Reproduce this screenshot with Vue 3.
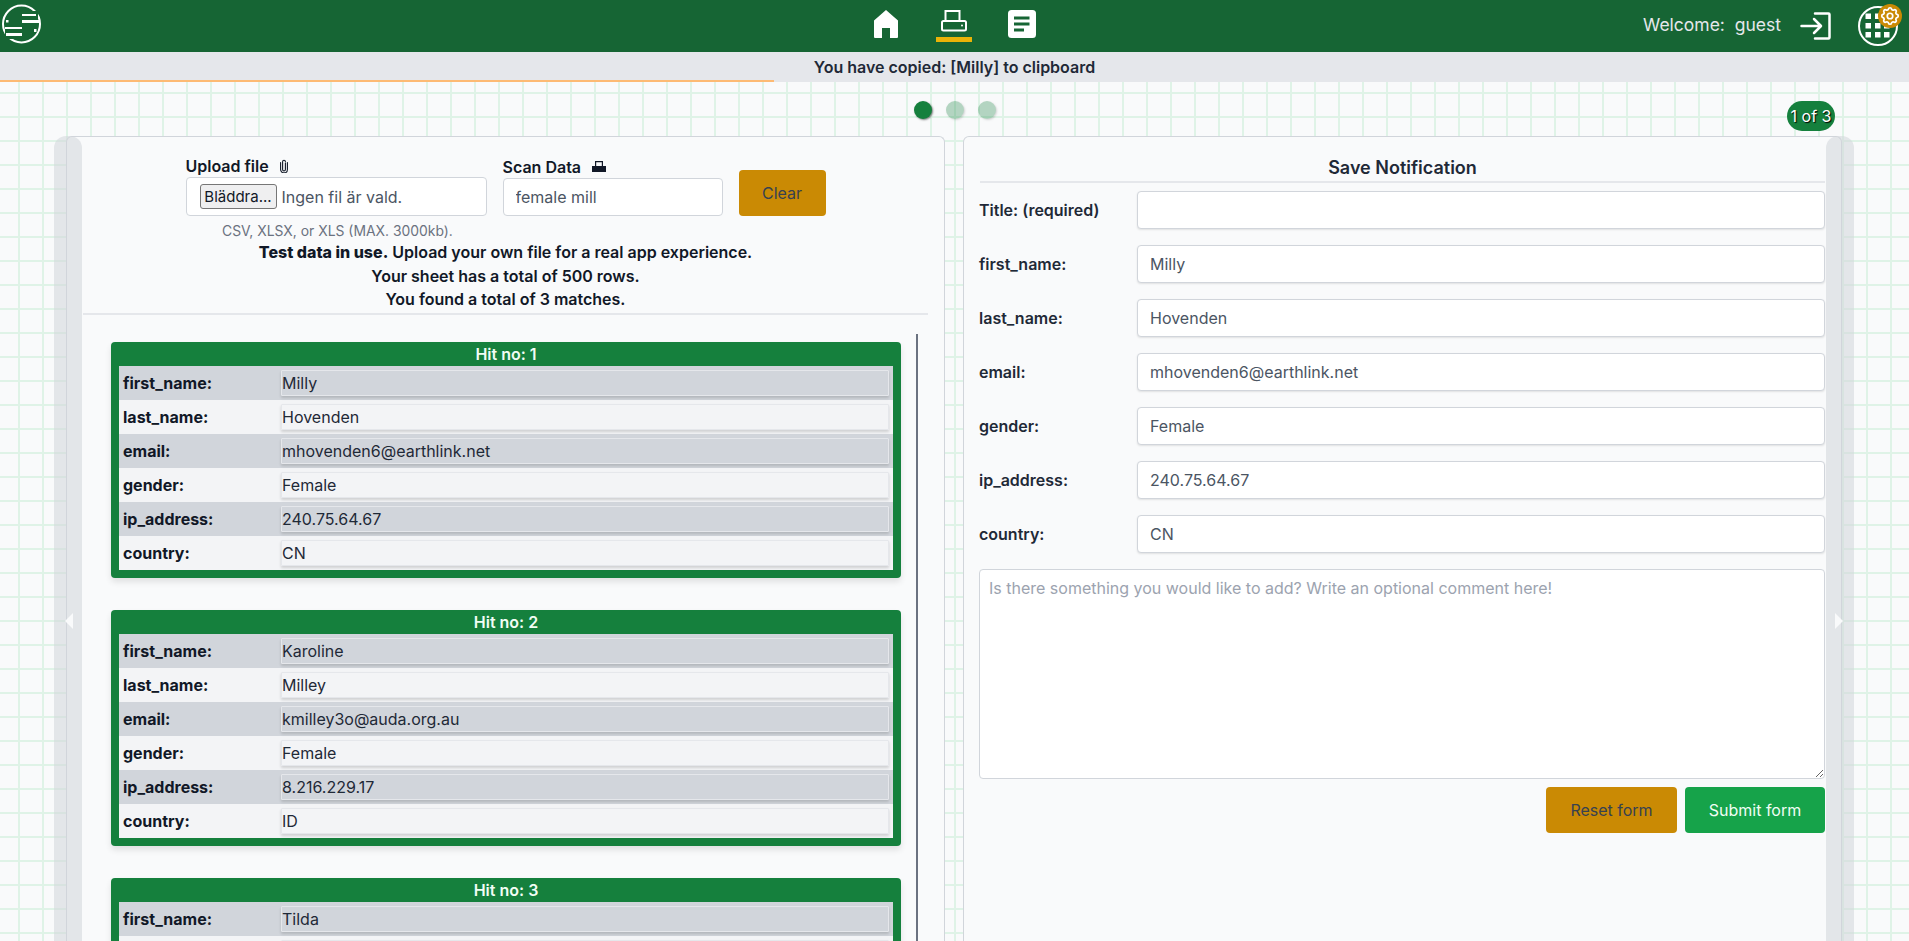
<template>
  <div class="page">
    <header class="topbar">
      <div class="side">
        <svg class="logo" width="42" height="52" viewBox="0 0 42 52">
          <circle cx="21.500" cy="24" r="18.500" fill="none" stroke="#fff" stroke-width="2" />
          <rect x="21" y="11" width="17" height="15" fill="#166534" />
          <rect x="5" y="24" width="17" height="15" fill="#166534" />
          <rect x="22" y="14" width="14" height="2" fill="#fff" />
          <rect x="22" y="20" width="17" height="3" fill="#fff" />
          <rect x="5" y="27" width="17" height="2" fill="#fff" />
          <rect x="6" y="33" width="16" height="3" fill="#fff" />
          <rect x="6" y="20" width="2.500" height="2.500" fill="#fff" />
          <rect x="34" y="29" width="2.500" height="3" fill="#fff" />
        </svg>
      </div>
      <nav class="nav">
        <a class="nav-item">
          <svg width="24" height="28" viewBox="0 0 24 28"><path d="M12 0 24 10.500V27a1 1 0 0 1-1 1h-7V18H8v10H1a1 1 0 0 1-1-1V10.500Z" fill="#fff" /></svg>
        </a>
        <a class="nav-item active">
          <svg width="26" height="22" viewBox="0 0 26 22" fill="none" stroke="#fff" stroke-width="2"><path d="M4.500 11V1h14v10" /><rect x="1" y="11" width="24" height="9.500" rx="1.500" /><circle cx="21" cy="15.500" r="1" fill="#fff" stroke="none" /></svg>
        </a>
        <a class="nav-item">
          <svg width="28" height="28" viewBox="0 0 28 28"><rect width="28" height="28" rx="3.500" fill="#fff" /><path d="M6 6.500h15.500v3H6zM6 12.500h15.500v3H6zM6 18.500h10v3H6z" fill="#166534" /></svg>
        </a>
      </nav>
      <div class="side user">
        <span class="welcome">Welcome:&nbsp; guest</span>
        <svg class="login-icon" width="31" height="28" viewBox="0 0 31 28" fill="none" stroke="#fff" stroke-width="2.500" stroke-linecap="round" stroke-linejoin="round"><path d="M15 1.500h13.500a1 1 0 0 1 1 1v23a1 1 0 0 1-1 1H15" /><path d="M1.500 14h19M14 7l7 7-7 7" /></svg>
        <span class="apps">
          <svg width="40" height="40" viewBox="0 0 40 40"><circle cx="20" cy="20" r="19" fill="none" stroke="#fff" stroke-width="2" /><g fill="#fff"><rect v-for="s in appSquares" :key="s[0] + '-' + s[1]" :x="s[0]" :y="s[1]" width="5.500" height="5.500" /></g></svg>
          <svg class="cog" width="24" height="24" viewBox="0 0 24 24" fill="none" stroke="#fff" stroke-width="1.900"><path d="M10.325 4.317c.426-1.756 2.924-1.756 3.350 0a1.724 1.724 0 002.573 1.066c1.543-.94 3.310.826 2.370 2.370a1.724 1.724 0 001.065 2.572c1.756.426 1.756 2.924 0 3.350a1.724 1.724 0 00-1.066 2.573c.94 1.543-.826 3.310-2.370 2.370a1.724 1.724 0 00-2.572 1.065c-.426 1.756-2.924 1.756-3.350 0a1.724 1.724 0 00-2.573-1.066c-1.543.94-3.310-.826-2.370-2.370a1.724 1.724 0 00-1.065-2.572c-1.756-.426-1.756-2.924 0-3.350a1.724 1.724 0 001.066-2.573c-.94-1.543.826-3.310 2.370-2.370.996.608 2.296.07 2.572-1.065z" /><path d="M15 12a3 3 0 11-6 0 3 3 0 016 0z" /></svg>
        </span>
      </div>
    </header>

    <div class="notice">
      You have copied: [Milly] to clipboard
      <div class="notice-progress"></div>
    </div>

    <main class="main">
      <div class="dots">
        <span class="dot on"></span>
        <span class="dot"></span>
        <span class="dot"></span>
      </div>

      <div class="panels">
        <span class="badge">1 of 3</span>

        <section class="panel">
          <div class="strip left"><span class="arrow"></span></div>
          <div class="upload-row">
            <div class="upload-col">
              <label class="field-label">Upload file
                <svg width="8" height="14" viewBox="0 0 8 14" fill="none" stroke="#111827" stroke-width="1.100" stroke-linecap="round"><path d="M5.400 4v6.500a1.400 1.400 0 0 1-2.800 0V2.700a1.400 1.400 0 0 1 2.800 0" /><path d="M7.400 3.500v7a3.400 3.400 0 0 1-6.800 0v-7" /></svg>
              </label>
              <div class="file-box">
                <button class="file-btn" type="button">Bläddra...</button>
                <span class="file-name">Ingen fil är vald.</span>
              </div>
            </div>
            <div class="scan-col">
              <label class="field-label">Scan Data
                <svg width="14" height="11" viewBox="0 0 14 11"><path d="M3 0h8v5h3v6H0V5h3Zm1.200 1.200V5h5.600V1.200Z" fill="#111827" /></svg>
              </label>
              <input class="scan-input" type="text" value="female mill">
            </div>
            <button class="btn amber clear" type="button">Clear</button>
          </div>
          <p class="hint">CSV, XLSX, or XLS (MAX. 3000kb).</p>
          <div class="summary">
            <p><b>Test data in use.</b> Upload your own file for a real app experience.</p>
            <p>Your sheet has a total of 500 rows.</p>
            <p>You found a total of 3 matches.</p>
          </div>

          <div class="hits">
            <article v-for="(hit, i) in hits" :key="i" class="hit">
              <h3 class="hit-title">Hit no: {{ i + 1 }}</h3>
              <div v-for="key in fields" :key="key" class="hit-row">
                <span class="hit-key">{{ key }}:</span>
                <span class="hit-val">{{ hit[key] }}</span>
              </div>
            </article>
          </div>
        </section>

        <section class="panel">
          <div class="strip right"><span class="arrow"></span></div>
          <h2 class="form-title">Save Notification</h2>
          <form class="form" @submit.prevent>
            <div class="form-row">
              <label>Title: (required)</label>
              <input type="text">
            </div>
            <div v-for="key in fields" :key="key" class="form-row">
              <label>{{ key }}:</label>
              <input type="text" :value="hits[0][key]">
            </div>
            <textarea placeholder="Is there something you would like to add? Write an optional comment here!"></textarea>
            <div class="form-actions">
              <button class="btn amber reset" type="reset">Reset form</button>
              <button class="btn green submit" type="button">Submit form</button>
            </div>
          </form>
        </section>
      </div>
    </main>
  </div>
</template>

<script setup>
const fields = ['first_name', 'last_name', 'email', 'gender', 'ip_address', 'country']

const hits = [
  { first_name: 'Milly', last_name: 'Hovenden', email: 'mhovenden6@earthlink.net', gender: 'Female', ip_address: '240.75.64.67', country: 'CN' },
  { first_name: 'Karoline', last_name: 'Milley', email: 'kmilley3o@auda.org.au', gender: 'Female', ip_address: '8.216.229.17', country: 'ID' },
  { first_name: 'Tilda' }
]

const appSquares = []
for (const y of [7.5, 17, 26]) {
  for (const x of [7.5, 17, 26]) appSquares.push([x, y])
}
</script>

<style>
html, body { margin: 0; overflow: hidden; }
</style>

<style scoped>
* { box-sizing: border-box; }
p, h2, h3 { margin: 0; }
.page { height: 941px; overflow: hidden; display: flex; flex-direction: column; font-family: Inter, "Liberation Sans", sans-serif; color: #1f2937; background: #f9fafb; }

.topbar { height: 52px; flex: none; background: #166534; display: grid; grid-template-columns: 1fr auto 1fr; align-items: center; }
.side { display: flex; align-items: center; }
.logo { display: block; }
.nav { display: flex; gap: 38px; align-items: flex-start; height: 52px; padding-top: 10px; margin-left: -2px; }
.nav-item { display: flex; justify-content: center; width: 30px; height: 32px; }
.nav-item.active { position: relative; }
.nav-item.active::after { content: ""; position: absolute; left: -3px; right: -3px; top: 27px; height: 5px; background: #eab308; }
.user { justify-content: flex-end; padding-right: 11px; }
.welcome { font-size: 17.5px; line-height: 24px; margin-bottom: 3px; color: #e5e7eb; margin-right: 19px; }
.login-icon { margin-right: 27px; }
.apps { position: relative; display: block; width: 40px; height: 40px; }
.apps svg { display: block; }
.cog { position: absolute; top: -2px; right: -4px; background: #ca8a04; border-radius: 50%; padding: 1px; }

.notice { height: 30px; flex: none; position: relative; background: #e5e7eb; text-align: center; font-size: 16px; font-weight: 600; line-height: 30px; color: #1f2937; }
.notice-progress { position: absolute; left: 0; bottom: 0; width: 774px; height: 2px; background: #fdba74; }

.main {
  flex: 1;
  min-height: 0;
  overflow: hidden;
  padding-top: 19px;
  background-color: #f9fafb;
  background-image: linear-gradient(#dff3e7 2px, transparent 2px), linear-gradient(90deg, #dff3e7 2px, transparent 2px);
  background-size: 24px 24px;
  background-position: 18px 10px;
}
.dots { display: flex; justify-content: center; gap: 14px; height: 18px; }
.dot { width: 18px; height: 18px; border-radius: 50%; background: #15803d; opacity: 0.3; box-shadow: 1px 1px 2px rgba(0, 0, 0, 0.5); }
.dot.on { opacity: 1; }

.panels { position: relative; display: grid; grid-template-columns: 1fr 1fr; gap: 18px; margin: 17px 67px 0 66px; height: 1000px; }
.badge { position: absolute; right: 7px; top: -35px; width: 48px; height: 30px; border-radius: 15px; background: #15803d; color: #fff; font-size: 16px; line-height: 30px; text-align: center; text-shadow: 1px 1px 1px #000; z-index: 3; }

.panel { position: relative; min-width: 0; background: #f9fafb; border: 1px solid #d1d5db; border-bottom: 0; border-radius: 6px 6px 0 0; }
.strip { position: absolute; top: -1px; bottom: 0; width: 28px; background: rgba(209, 213, 219, 0.55); border-radius: 12px 12px 0 0; }
.strip.left { left: -13px; }
.strip.right { right: -13px; }
.arrow { position: absolute; top: 477px; width: 0; height: 0; border-style: solid; border-color: transparent; border-width: 8px 0; }
.strip.left .arrow { left: 11px; border-right: 8px solid #f9fafb; }
.strip.right .arrow { right: 11px; border-left: 8px solid #f9fafb; }

.upload-row { display: flex; justify-content: center; align-items: flex-end; gap: 16px; padding-top: 17px; }
.field-label { display: flex; align-items: center; gap: 11px; height: 23px; font-size: 16px; font-weight: 600; color: #111827; }
.file-box { width: 301px; height: 39px; display: flex; align-items: center; gap: 5px; padding-left: 13px; background: #fff; border: 1px solid #d1d5db; border-radius: 4px; }
.file-btn { width: 77px; height: 25px; padding: 0; font: inherit; font-size: 15px; color: #111827; background: #efeff0; border: 1px solid #767676; border-radius: 3px; }
.file-name { font-size: 16px; color: #4b5563; }
.scan-input { display: block; width: 220px; height: 38px; padding: 0 12px; font: inherit; font-size: 16px; color: #4b5563; background: #fff; border: 1px solid #d1d5db; border-radius: 4px; }
.btn { border: 0; border-radius: 4px; font: inherit; font-size: 16px; }
.btn.amber { background: #ca8a04; color: #374151; }
.btn.green { background: #16a34a; color: #f0fdf4; }
.clear { width: 87px; height: 46px; }

.hint { margin-top: 6px; margin-bottom: 1px; padding-left: 155px; font-size: 13.900px; line-height: 18px; color: #6b7280; }
.summary { margin: 0 16px; padding-bottom: 1px; border-bottom: 2px solid #e5e7eb; text-align: center; font-size: 16px; font-weight: 600; line-height: 23.5px; color: #111827; }
.summary b { font-weight: 800; }

.hits { display: flex; flex-direction: column; gap: 32px; width: 851px; margin-top: 19px; padding: 8px 15px 0 44px; border-right: 2px solid #6b7280; }
.hit { background: #15803d; border-radius: 4px; padding: 0 8px 8px; box-shadow: 0 4px 6px rgba(0, 0, 0, 0.1); }
.hit-title { height: 24px; font-size: 16px; font-weight: 600; line-height: 24px; text-align: center; color: #f0fdf4; }
.hit-row { height: 34px; display: flex; align-items: center; padding: 0 4px; background: #f3f4f6; }
.hit-row:nth-of-type(odd) { background: #d1d5db; }
.hit-key { width: 158px; flex: none; font-size: 16px; font-weight: 700; line-height: 24px; color: #111827; }
.hit-val { flex: 1; height: 26px; font-size: 16px; line-height: 24px; color: #1f2937; border: 1px solid #e5e7eb; border-radius: 1px; box-shadow: 0 2px 3px rgba(0, 0, 0, 0.15); }

.form-title { margin: 0 16px; height: 46px; padding-top: 19px; border-bottom: 2px solid #e5e7eb; text-align: center; font-size: 18px; font-weight: 600; line-height: 24px; color: #1f2937; }
.form { display: flex; flex-direction: column; gap: 16px; padding: 8px 16px 0 15px; }
.form-row { display: flex; align-items: center; height: 38px; }
.form-row label { width: 158px; flex: none; font-size: 16px; font-weight: 600; color: #1f2937; }
.form-row input { flex: 1; min-width: 0; height: 38px; padding: 0 12px; font: inherit; font-size: 16px; color: #4b5563; background: #fff; border: 1px solid #d1d5db; border-radius: 4px; box-shadow: 0 1px 2px rgba(0, 0, 0, 0.1); }
textarea { display: block; height: 210px; padding: 8px 9px; font: inherit; font-size: 16px; background: #fff; border: 1px solid #d1d5db; border-radius: 4px; }
textarea::placeholder { color: #9ca3af; }
.form-actions { display: flex; justify-content: flex-end; gap: 8px; margin-top: -8px; }
.reset { width: 131px; height: 46px; }
.submit { width: 140px; height: 46px; }
</style>
